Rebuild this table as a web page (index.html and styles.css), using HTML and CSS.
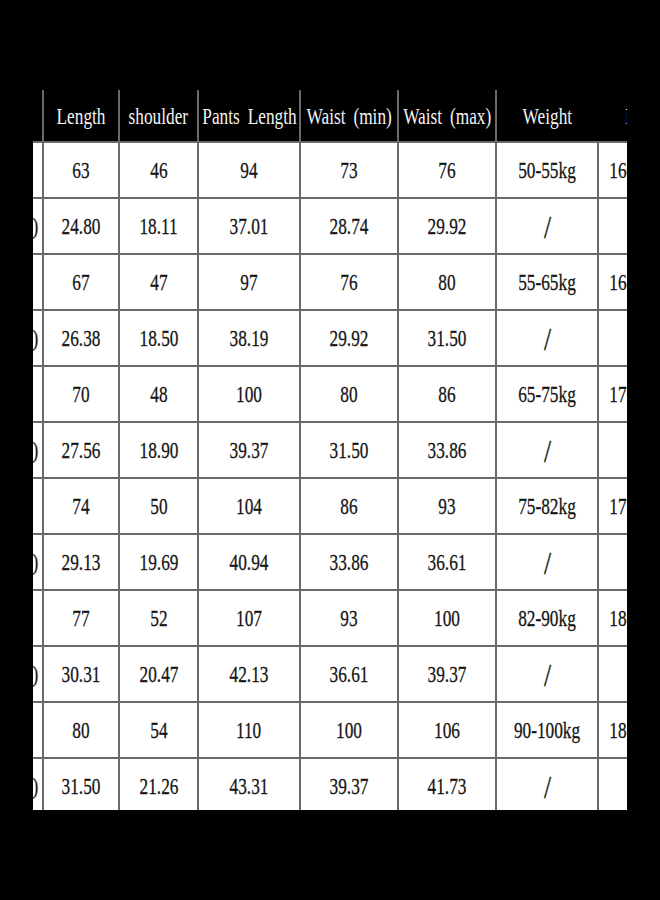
FILE: index.html
```html
<!DOCTYPE html>
<html lang="en">
<head>
<meta charset="utf-8">
<title>Size chart</title>
<link rel="stylesheet" href="styles.css">
</head>
<body>
<div class="page">
  <div class="clip">
    <div class="chart">
      <div class="hd"></div>
      <div class="hd"><span class="t">Length</span></div>
      <div class="hd"><span class="t">shoulder</span></div>
      <div class="hd"><span class="t">Pants Length</span></div>
      <div class="hd"><span class="t">Waist (min)</span></div>
      <div class="hd"><span class="t">Waist (max)</span></div>
      <div class="hd"><span class="t">Weight</span></div>
      <div class="hd no-line"><span class="t">Height</span></div>

      <div class="c"></div>
      <div class="c"><span class="t">63</span></div>
      <div class="c"><span class="t">46</span></div>
      <div class="c"><span class="t">94</span></div>
      <div class="c"><span class="t">73</span></div>
      <div class="c"><span class="t">76</span></div>
      <div class="c"><span class="t">50-55kg</span></div>
      <div class="c"><span class="t">160-165cm</span></div>

      <div class="c unit"><span class="t">(inch)</span></div>
      <div class="c"><span class="t">24.80</span></div>
      <div class="c"><span class="t">18.11</span></div>
      <div class="c"><span class="t">37.01</span></div>
      <div class="c"><span class="t">28.74</span></div>
      <div class="c"><span class="t">29.92</span></div>
      <div class="c"><span class="t slash">/</span></div>
      <div class="c"></div>

      <div class="c"></div>
      <div class="c"><span class="t">67</span></div>
      <div class="c"><span class="t">47</span></div>
      <div class="c"><span class="t">97</span></div>
      <div class="c"><span class="t">76</span></div>
      <div class="c"><span class="t">80</span></div>
      <div class="c"><span class="t">55-65kg</span></div>
      <div class="c"><span class="t">165-170cm</span></div>

      <div class="c unit"><span class="t">(inch)</span></div>
      <div class="c"><span class="t">26.38</span></div>
      <div class="c"><span class="t">18.50</span></div>
      <div class="c"><span class="t">38.19</span></div>
      <div class="c"><span class="t">29.92</span></div>
      <div class="c"><span class="t">31.50</span></div>
      <div class="c"><span class="t slash">/</span></div>
      <div class="c"></div>

      <div class="c"></div>
      <div class="c"><span class="t">70</span></div>
      <div class="c"><span class="t">48</span></div>
      <div class="c"><span class="t">100</span></div>
      <div class="c"><span class="t">80</span></div>
      <div class="c"><span class="t">86</span></div>
      <div class="c"><span class="t">65-75kg</span></div>
      <div class="c"><span class="t">170-175cm</span></div>

      <div class="c unit"><span class="t">(inch)</span></div>
      <div class="c"><span class="t">27.56</span></div>
      <div class="c"><span class="t">18.90</span></div>
      <div class="c"><span class="t">39.37</span></div>
      <div class="c"><span class="t">31.50</span></div>
      <div class="c"><span class="t">33.86</span></div>
      <div class="c"><span class="t slash">/</span></div>
      <div class="c"></div>

      <div class="c"></div>
      <div class="c"><span class="t">74</span></div>
      <div class="c"><span class="t">50</span></div>
      <div class="c"><span class="t">104</span></div>
      <div class="c"><span class="t">86</span></div>
      <div class="c"><span class="t">93</span></div>
      <div class="c"><span class="t">75-82kg</span></div>
      <div class="c"><span class="t">175-180cm</span></div>

      <div class="c unit"><span class="t">(inch)</span></div>
      <div class="c"><span class="t">29.13</span></div>
      <div class="c"><span class="t">19.69</span></div>
      <div class="c"><span class="t">40.94</span></div>
      <div class="c"><span class="t">33.86</span></div>
      <div class="c"><span class="t">36.61</span></div>
      <div class="c"><span class="t slash">/</span></div>
      <div class="c"></div>

      <div class="c"></div>
      <div class="c"><span class="t">77</span></div>
      <div class="c"><span class="t">52</span></div>
      <div class="c"><span class="t">107</span></div>
      <div class="c"><span class="t">93</span></div>
      <div class="c"><span class="t">100</span></div>
      <div class="c"><span class="t">82-90kg</span></div>
      <div class="c"><span class="t">180-185cm</span></div>

      <div class="c unit"><span class="t">(inch)</span></div>
      <div class="c"><span class="t">30.31</span></div>
      <div class="c"><span class="t">20.47</span></div>
      <div class="c"><span class="t">42.13</span></div>
      <div class="c"><span class="t">36.61</span></div>
      <div class="c"><span class="t">39.37</span></div>
      <div class="c"><span class="t slash">/</span></div>
      <div class="c"></div>

      <div class="c"></div>
      <div class="c"><span class="t">80</span></div>
      <div class="c"><span class="t">54</span></div>
      <div class="c"><span class="t">110</span></div>
      <div class="c"><span class="t">100</span></div>
      <div class="c"><span class="t">106</span></div>
      <div class="c"><span class="t">90-100kg</span></div>
      <div class="c"><span class="t">185-190cm</span></div>

      <div class="c unit"><span class="t">(inch)</span></div>
      <div class="c"><span class="t">31.50</span></div>
      <div class="c"><span class="t">21.26</span></div>
      <div class="c"><span class="t">43.31</span></div>
      <div class="c"><span class="t">39.37</span></div>
      <div class="c"><span class="t">41.73</span></div>
      <div class="c"><span class="t slash">/</span></div>
      <div class="c"></div>
    </div>
  </div>
</div>
</body>
</html>
```
FILE: styles.css
```css
html, body {
  margin: 0;
  padding: 0;
  background: #000;
}

body {
  width: 660px;
  height: 900px;
  overflow: hidden;
  font-family: "Liberation Serif", "DejaVu Serif", serif;
}

.page {
  padding: 90px 0 0 33px;
}

.clip {
  width: 594px;
  height: 720px;
  overflow: hidden;
  background: #000;
}

.chart {
  margin-left: -51px;
  width: max-content;
  display: grid;
  grid-template-columns: 60px 74px 77px 100px 96px 96px 100px 100px;
  grid-template-rows: 51px repeat(12, 54px);
  gap: 2px;
  background: #6a6a6a;
}

.hd,
.c {
  display: flex;
  align-items: center;
  justify-content: center;
  overflow: hidden;
  white-space: nowrap;
  font-size: 24px;
  line-height: 1;
}

.hd {
  background: #000;
  color: #f4f4f4;
  word-spacing: 5px;
}

.c {
  background: #fff;
  color: #151515;
  -webkit-text-stroke: 0.3px #151515;
}

.t {
  display: inline-block;
  transform: scaleX(0.72);
}

.slash {
  font-size: 32px;
  transform: scaleX(0.8) translateY(1px);
}

.unit {
  justify-content: flex-end;
  padding-right: 4px;
}

.unit .t {
  transform-origin: right center;
}

.no-line {
  box-shadow: -2px 0 0 #000;
}
```
